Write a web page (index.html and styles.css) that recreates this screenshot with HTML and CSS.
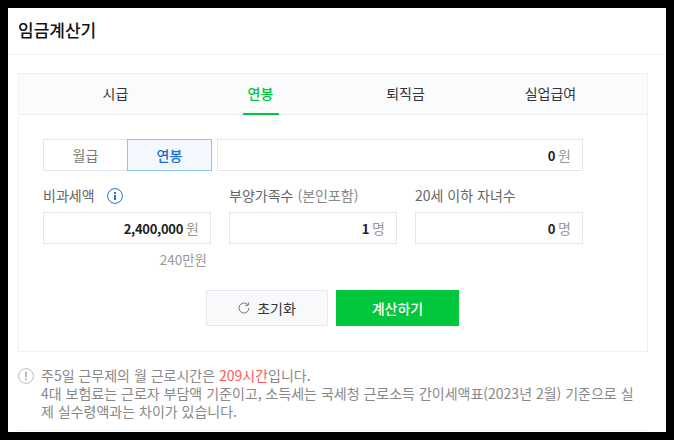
FILE: index.html
```html
<!DOCTYPE html>
<html lang="ko">
<head>
<meta charset="utf-8">
<title>임금계산기</title>
<link rel="stylesheet" href="styles.css">
</head>
<body>
<main class="page">
  <header class="head"><h1>임금계산기</h1></header>
  <section class="panel">
    <nav class="tabs">
      <a class="tab">시급</a>
      <a class="tab active">연봉</a>
      <a class="tab">퇴직금</a>
      <a class="tab">실업급여</a>
    </nav>
    <div class="body">
      <div class="row-top">
        <div class="seg">
          <button class="seg-btn">월급</button>
          <button class="seg-btn on">연봉</button>
        </div>
        <div class="field grow"><b>0</b><span>원</span></div>
      </div>
      <div class="row-fields">
        <div class="col">
          <div class="label">비과세액<svg class="info" width="16" height="16" viewBox="0 0 16 16"><circle cx="8" cy="8" r="7.4" fill="none" stroke="#1a73d9" stroke-width="1"/><rect x="7" y="7" width="2" height="5" fill="#1a73d9"/><rect x="7" y="4" width="2" height="2" fill="#1a73d9"/></svg></div>
          <div class="field"><b>2,400,000</b><span>원</span></div>
          <div class="hint">240만원</div>
        </div>
        <div class="col">
          <div class="label">부양가족수 <small>(본인포함)</small></div>
          <div class="field"><b>1</b><span>명</span></div>
        </div>
        <div class="col">
          <div class="label">20세 이하 자녀수</div>
          <div class="field"><b>0</b><span>명</span></div>
        </div>
      </div>
      <div class="actions">
        <button class="btn reset">
          <svg width="12" height="12" viewBox="0 0 12 12"><path d="M9.6 2.6A5 5 0 1 0 11 6" fill="none" stroke="#777" stroke-width="1"/><path d="M10.3 0.4V3.4H7.3" fill="none" stroke="#777" stroke-width="1"/></svg>
          초기화
        </button>
        <button class="btn calc">계산하기</button>
      </div>
    </div>
  </section>
  <footer class="note">
    <svg class="warn" width="16" height="16" viewBox="0 0 16 16"><circle cx="8" cy="8" r="7.4" fill="none" stroke="#bbb" stroke-width="1"/><rect x="7.2" y="3.8" width="1.6" height="5.6" fill="#aaa"/><rect x="7.2" y="10.6" width="1.6" height="1.6" fill="#aaa"/></svg>
    <p>주5일 근무제의 월 근로시간은 <em>209시간</em>입니다.<br>4대 보험료는 근로자 부담액 기준이고, 소득세는 국세청 근로소득 간이세액표(2023년 2월) 기준으로 실제 실수령액과는 차이가 있습니다.</p>
  </footer>
  <div class="next"></div>
</main>
</body>
</html>
```
FILE: styles.css
```css
* { box-sizing: border-box; }
html, body { margin: 0; padding: 0; height: 100%; background: #000; }
body { padding: 8px; overflow: hidden; font-family: "Noto Sans CJK KR", "Noto Sans", sans-serif; color: #333; }
.page { background: #fff; height: 424px; overflow: hidden; }
.head { height: 47px; border-bottom: 1px solid #eef0f3; padding: 0 10px 2px; display: flex; align-items: center; }
.head h1 { margin: 0; font-size: 17px; font-weight: 500; color: #111; line-height: 44px; }
.panel { margin: 18px 18px 0 10px; height: 279px; border: 1px solid #eef0f3; }
.tabs { height: 41px; background: #fafbfd; border-bottom: 1px solid #e9ecf2; padding: 0 24px; display: grid; grid-template-columns: repeat(4, 1fr); }
.tab { display: flex; justify-content: center; align-items: center; font-size: 14px; color: #333; position: relative; height: 40px; padding-bottom: 2px; }
.tab.active { color: #00c73c; font-weight: 500; }
.tab.active::after { content: ""; position: absolute; left: 50%; margin-left: -18px; width: 36px; bottom: -1px; height: 2px; background: #00c73c; }
.body { padding: 24px 64px 0 24px; }
.row-top { display: flex; gap: 5px; }
.seg { display: flex; width: 169px; height: 32px; }
.seg-btn { flex: 1; padding: 0; font: inherit; font-size: 14px; color: #777; background: #fff; border: 1px solid #e2e6ec; border-right: 0; }
.seg-btn.on { color: #1a6fd0; font-weight: 500; background: #f3f8fe; border: 1px solid #90c2f2; }
.field { height: 32px; border: 1px solid #e2e6ec; display: flex; justify-content: flex-end; align-items: center; gap: 3px; padding: 0 11px; font-size: 13px; color: #222; }
.field b { font-weight: 700; letter-spacing: -0.3px; }
.field span { color: #999; font-size: 14px; }
.grow { flex: 1; }
.row-fields { display: grid; grid-template-columns: 168px 168px 168px; column-gap: 18px; margin-top: 13px; }
.label { height: 28px; font-size: 14px; line-height: 22px; color: #666; display: flex; align-items: flex-start; gap: 4px; white-space: nowrap; }
.label small { font-size: 14px; color: #888; }
.info { margin: 4px 0 0 8px; }
.hint { text-align: right; padding-right: 4px; font-size: 13.5px; line-height: 30px; color: #999; }
.actions { display: flex; gap: 8px; margin-left: 163px; position: relative; margin-top: 16px; }
.btn { height: 36px; font: inherit; font-size: 14px; display: flex; align-items: center; justify-content: center; gap: 7px; padding: 0; }
.reset { width: 122px; background: #f8f9fb; border: 1px solid #e6e9ef; color: #333; }
.calc { width: 123px; background: #00c73c; border: 0; color: #fff; font-weight: 500; }
.note { display: flex; gap: 7px; margin: 14px 24px 0 10px; }
.warn { flex: none; margin-top: 2px; }
.note p { margin: 0; font-size: 14px; line-height: 18px; color: #888; word-break: break-all; }
.note em { font-style: normal; color: #ff5a5a; }
.next { margin: 10px 18px 0 10px; border-top: 1px solid #eef0f3; }
```
